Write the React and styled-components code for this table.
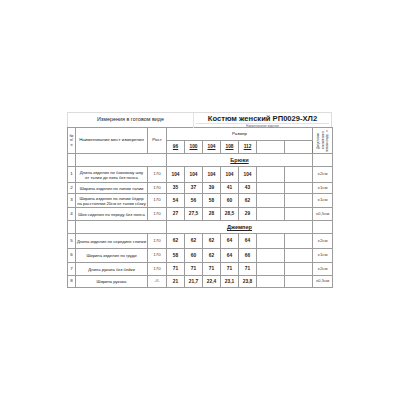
import styled, { createGlobalStyle } from 'styled-components'

const GlobalStyle = createGlobalStyle`
  body {
    margin: 0;
    background: #fff;
    font-family: 'Liberation Sans', Arial, sans-serif;
    color: #222;
  }
`

const sizes = ['96', '100', '104', '108', '112']

const sections = [
  {
    title: 'Брюки',
    rows: [
      { n: 1, name: ['Длина изделия по боковому шву', 'от талии до низа без пояса'], h: 16, growth: '170', values: ['104', '104', '104', '104', '104'], tol: '±2см' },
      { n: 2, name: ['Ширина изделия по линии талии'], h: 11, growth: '170', values: ['35', '37', '39', '41', '43'], tol: '±1см' },
      { n: 3, name: ['Ширина изделия по линии бёдер', 'на расстоянии 20см от талии сбоку'], h: 14, growth: '170', values: ['54', '56', '58', '60', '62'], tol: '±1см' },
      { n: 4, name: ['Шов сидения по переду без пояса'], h: 13, growth: '170', values: ['27', '27,5', '28', '28,5', '29'], tol: '±0,5см' },
    ],
  },
  {
    title: 'Джемпер',
    rows: [
      { n: 5, name: ['Длина изделия по середине спинки'], h: 15, growth: '170', values: ['62', '62', '62', '64', '64'], tol: '±2см' },
      { n: 6, name: ['Ширина изделия по груди'], h: 14, growth: '170', values: ['58', '60', '62', '64', '66'], tol: '±1см' },
      { n: 7, name: ['Длина рукава без бейки'], h: 13, growth: '170', values: ['71', '71', '71', '71', '71'], tol: '±2см' },
      { n: 8, name: ['Ширина рукава'], h: 12, growth: '-//-', values: ['21', '21,7', '22,4', '23,1', '23,8'], tol: '±0,5см' },
    ],
  },
]

function App() {
  return (
    <>
      <GlobalStyle />
      <Sheet>
        <TitleBar>
          <TitleLeft>Измерения в готовом виде</TitleLeft>
          <TitleRight>
            <ProductName>Костюм женский РП0029-ХЛ2</ProductName>
            <Caption>Наименование изделия</Caption>
          </TitleRight>
        </TitleBar>
        <Table>
          <colgroup>
            <col style={{ width: 8 }} />
            <col style={{ width: 72 }} />
            <col style={{ width: 19 }} />
            {sizes.map((s) => (
              <col key={s} style={{ width: 18 }} />
            ))}
            <col style={{ width: 28 }} />
            <col style={{ width: 28 }} />
            <col style={{ width: 20 }} />
          </colgroup>
          <tbody>
            <Row $h={13}>
              <Cell rowSpan={2}>
                <NumHead>
                  <span>№</span>
                  <span>п/</span>
                  <span>п</span>
                </NumHead>
              </Cell>
              <Cell rowSpan={2}>Наименование мест измерения</Cell>
              <Cell rowSpan={2} $edge>Рост</Cell>
              <Cell colSpan={7}>Размер</Cell>
              <Cell rowSpan={2} $edge>
                <Rotated>
                  <RotLine>Допустимое</RotLine>
                  <RotLine>отклонение в</RotLine>
                  <RotLine>готовом виде, ±</RotLine>
                </Rotated>
              </Cell>
            </Row>
            <Row $h={13}>
              {sizes.map((s) => (
                <Cell key={s} $bold $under>
                  {s}
                </Cell>
              ))}
              <Cell />
              <Cell />
            </Row>
            {sections.map((sec) => (
              <Section key={sec.title} section={sec} />
            ))}
          </tbody>
        </Table>
      </Sheet>
    </>
  )
}

function Section({ section }) {
  return (
    <>
      <Row $h={13}>
        <Cell />
        <Cell colSpan={2} $edge />
        <Cell colSpan={7} $bold $under $big>
          {section.title}
        </Cell>
        <Cell $edge />
      </Row>
      {section.rows.map((r) => (
        <Row key={r.n} $h={r.h}>
          <Cell>{r.n}</Cell>
          <NameCell>
            {r.name.map((line) => (
              <div key={line}>{line}</div>
            ))}
          </NameCell>
          <Cell $edge $soft>{r.growth}</Cell>
          {r.values.map((v, i) => (
            <Cell key={i} $bold>
              {v}
            </Cell>
          ))}
          <Cell />
          <Cell />
          <Cell $edge $soft>{r.tol}</Cell>
        </Row>
      ))}
    </>
  )
}

export default App

const Sheet = styled.div`
  width: 265px;
  margin: 112px 0 0 67px;
`

const TitleBar = styled.div`
  display: grid;
  grid-template-columns: 126px 1fr;
  height: 15px;
  border: 1px solid #dcdcdc;
  border-bottom: none;
  box-sizing: border-box;
`

const TitleLeft = styled.div`
  font-size: 5.4px;
  padding-top: 2.5px;
  text-align: center;
  border-right: 1px solid #e4e4e4;
`

const TitleRight = styled.div`
  display: flex;
  flex-direction: column;
  align-items: center;
  padding-top: 1px;
`

const ProductName = styled.div`
  font-size: 7.6px;
  font-weight: bold;
  line-height: 9px;
  color: #1a1a1a;
  border-bottom: 1px solid #e2e2e2;
  padding: 0 12px;
`

const Caption = styled.div`
  font-size: 3px;
  line-height: 4px;
  color: #666;
`

const Table = styled.table`
  width: 265px;
  border-collapse: collapse;
  table-layout: fixed;
  font-size: 4.4px;
`

const Row = styled.tr`
  height: ${(p) => p.$h}px;
`

const Cell = styled.td`
  border: 1px solid #9c9c9c;
  ${(p) => p.$edge && 'border-left: 1.5px solid #7a7a7a;'}
  padding: 0;
  text-align: center;
  vertical-align: middle;
  white-space: nowrap;
  overflow: hidden;
  line-height: 1.1;
  font-weight: ${(p) => (p.$bold ? 'bold' : 'normal')};
  font-size: ${(p) => (p.$big ? '5.6px' : p.$bold ? '4.8px' : '4.4px')};
  text-decoration: ${(p) => (p.$under ? 'underline' : 'none')};
  color: ${(p) => (p.$soft ? '#444' : '#222')};
`

const NameCell = styled(Cell)`
  font-size: 4.2px;
  line-height: 5px;
`

const NumHead = styled.div`
  display: flex;
  flex-direction: column;
  align-items: center;
  font-size: 3.6px;
  line-height: 4.6px;
`

const Rotated = styled.div`
  writing-mode: vertical-rl;
  transform: rotate(180deg);
  height: 25px;
  width: 14px;
  margin: 0 auto;
  font-size: 2.9px;
  line-height: 4.5px;
  text-align: center;
  color: #333;
`

const RotLine = styled.span`
  display: block;
  white-space: nowrap;
`
